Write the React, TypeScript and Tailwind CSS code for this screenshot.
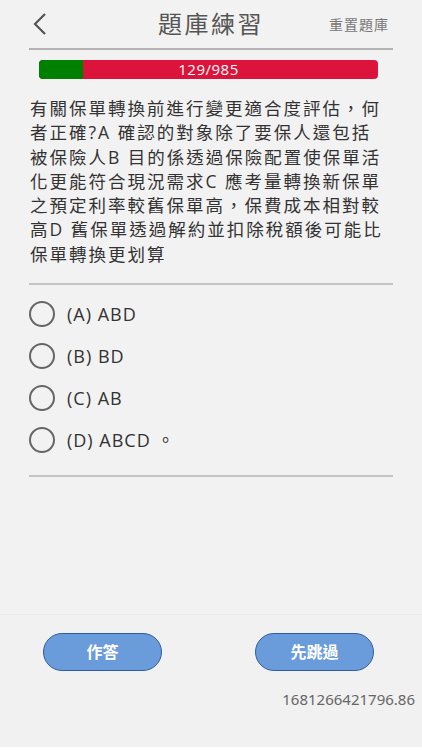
const font = "font-['Open_Sans','Noto_Sans_CJK_TC',sans-serif]";

const questionLines = [
  "有關保單轉換前進行變更適合度評估，何",
  "者正確?A 確認的對象除了要保人還包括",
  "被保險人B 目的係透過保險配置使保單活",
  "化更能符合現況需求C 應考量轉換新保單",
  "之預定利率較舊保單高，保費成本相對較",
  "高D 舊保單透過解約並扣除稅額後可能比",
  "保單轉換更划算",
];

const options = ["(A) ABD", "(B) BD", "(C) AB", "(D) ABCD 。"];

export default function App() {
  const done = 129;
  const total = 985;

  return (
    <div className={`w-[422px] h-[750px] bg-[#f2f2f2] flex flex-col ${font}`}>
      {/* Header */}
      <div className="h-[50px] mx-[29px] flex items-center justify-between border-b-2 border-[#b3b3b3] relative">
        <svg width="16" height="24" viewBox="0 0 16 24" className="ml-[3px]">
          <path d="M13 2 L3 12 L13 22" fill="none" stroke="#555" strokeWidth="2.2" />
        </svg>
        <span className="absolute left-1/2 -translate-x-1/2 text-[24px] text-[#555] tracking-[2.5px]">
          題庫練習
        </span>
        <span className="text-[14px] text-[#777] tracking-[1px] pr-[4px]">重置題庫</span>
      </div>

      {/* Progress */}
      <div className="ml-[39px] mr-[44px] mt-[10px] h-[19px] rounded-[4px] bg-[#dc143c] relative overflow-hidden">
        <div className="h-full bg-[#008000]" style={{ width: `${(done / total) * 100}%` }} />
        <span className="absolute inset-0 flex items-center justify-center text-white text-[15px] leading-none tracking-[0.5px]">
          {done}/{total}
        </span>
      </div>

      {/* Question */}
      <div className="mx-[30px] mt-[17px] text-[17.5px] leading-[24.3px] text-[#333] tracking-[2px]">
        {questionLines.map((l) => (
          <p key={l} className="whitespace-nowrap">
            {l}
          </p>
        ))}
      </div>

      <div className="mx-[29px] mt-[17px] border-t-2 border-[#c4c4c4]" />

      {/* Options */}
      <div className="mx-[29px] mt-[16px] flex flex-col gap-[16px]">
        {options.map((o) => (
          <div key={o} className="flex items-center h-[26px]">
            <span className="w-[26px] h-[26px] rounded-full border-2 border-[#666] shrink-0" />
            <span className="ml-[12px] text-[18px] text-[#333] tracking-[1px]">{o}</span>
          </div>
        ))}
      </div>

      <div className="mx-[29px] mt-[22px] border-t-2 border-[#c4c4c4]" />

      <div className="flex-1" />

      {/* Bottom */}
      <div className="h-[133px] bg-[#f1f1f1] border-t border-[#e9e9e9] flex flex-col">
        <div className="flex justify-between pl-[43px] pr-[48px] mt-[18px]">
          <button className="w-[119px] h-[38px] rounded-full bg-[#6a9bdb] border border-[#2f5ca3] text-white text-[16px] font-bold">
            作答
          </button>
          <button className="w-[119px] h-[38px] rounded-full bg-[#6a9bdb] border border-[#2f5ca3] text-white text-[16px] font-bold">
            先跳過
          </button>
        </div>
        <div className="text-right pr-[7px] mt-[17px] text-[15px] text-[#666] font-['Noto_Sans',sans-serif]">
          1681266421796.86
        </div>
      </div>
      <div className="h-[3px] bg-white" />
    </div>
  );
}
